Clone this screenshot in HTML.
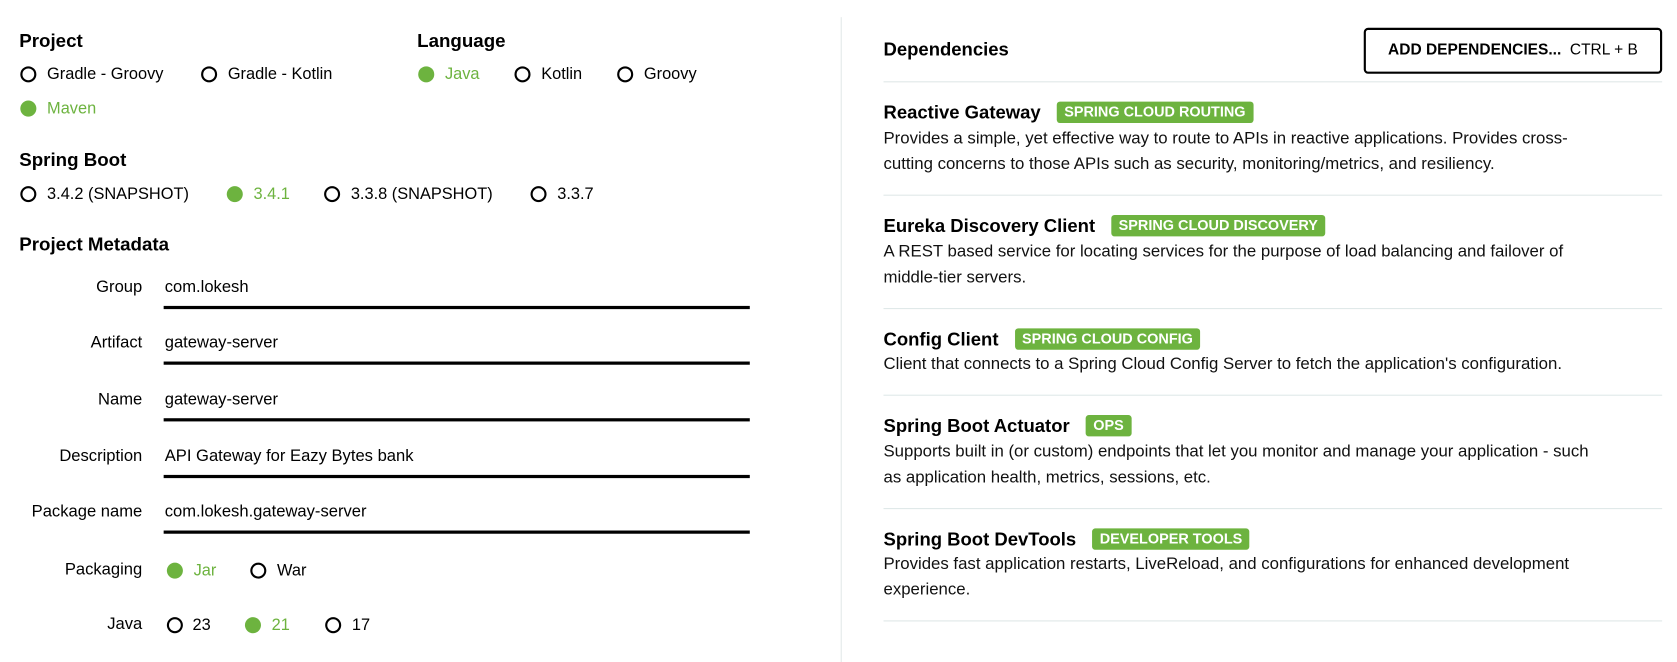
<!DOCTYPE html>
<html><head><meta charset="utf-8"><style>
html,body{margin:0;padding:0;background:#fff;width:1677px;height:662px;overflow:hidden}
#w{position:absolute;left:0;top:0;width:1568px;height:619px;transform:scale(1.0696);transform-origin:0 0;font-family:"Liberation Sans",Arial,sans-serif;color:#000}
.a{position:absolute;white-space:nowrap;line-height:1}
.h{font-weight:bold;font-size:17.5px}
.t{font-size:15.3px}
.r{position:absolute;width:11px;height:11px;border:2px solid #000;border-radius:50%}
.g{position:absolute;width:15px;height:15px;background:#6db33f;border-radius:50%}
.gt{color:#6db33f}
.lbl{position:absolute;right:1435px;font-size:15.5px;line-height:1;text-align:right}
.val{position:absolute;left:154px;font-size:15.5px;line-height:1}
.ul{position:absolute;left:153px;width:548px;height:3px;background:#000}
.dv{position:absolute;left:826px;width:728px;height:1px;background:#dfe8e8}
.dt{font-weight:bold;font-size:17.3px}
.tag{display:inline-block;background:#6db33f;color:#fff;font-size:13.5px;font-weight:bold;padding:3px 7px;border-radius:3px;margin-left:15px;vertical-align:2px}
.ds{font-size:15.7px;line-height:24px;color:#111}
</style></head><body><div id="w">
<div class="a h" style="left:18px;top:30px">Project</div>
<div class="r" style="left:19px;top:62px"></div><div class="a t" style="left:44px;top:62px">Gradle - Groovy</div>
<div class="r" style="left:188px;top:62px"></div><div class="a t" style="left:213px;top:62px">Gradle - Kotlin</div>
<div class="g" style="left:19px;top:94px"></div><div class="a t gt" style="left:44px;top:94px">Maven</div>
<div class="a h" style="left:390px;top:30px">Language</div>
<div class="g" style="left:391px;top:62px"></div><div class="a t gt" style="left:416px;top:62px">Java</div>
<div class="r" style="left:481px;top:62px"></div><div class="a t" style="left:506px;top:62px">Kotlin</div>
<div class="r" style="left:577px;top:62px"></div><div class="a t" style="left:602px;top:62px">Groovy</div>
<div class="a h" style="left:18px;top:141px">Spring Boot</div>
<div class="r" style="left:19px;top:174px"></div><div class="a t" style="left:44px;top:174px">3.4.2 (SNAPSHOT)</div>
<div class="g" style="left:212px;top:174px"></div><div class="a t gt" style="left:237px;top:174px">3.4.1</div>
<div class="r" style="left:303px;top:174px"></div><div class="a t" style="left:328px;top:174px">3.3.8 (SNAPSHOT)</div>
<div class="r" style="left:496px;top:174px"></div><div class="a t" style="left:521px;top:174px">3.3.7</div>
<div class="a h" style="left:18px;top:220px">Project Metadata</div>

<div class="lbl" style="top:261px">Group</div><div class="val" style="top:261px">com.lokesh</div><div class="ul" style="top:286px"></div>
<div class="lbl" style="top:313px">Artifact</div><div class="val" style="top:313px">gateway-server</div><div class="ul" style="top:338px"></div>
<div class="lbl" style="top:366px">Name</div><div class="val" style="top:366px">gateway-server</div><div class="ul" style="top:391px"></div>
<div class="lbl" style="top:419px">Description</div><div class="val" style="top:419px">API Gateway for Eazy Bytes bank</div><div class="ul" style="top:444px"></div>
<div class="lbl" style="top:471px">Package name</div><div class="val" style="top:471px">com.lokesh.gateway-server</div><div class="ul" style="top:496px"></div>
<div class="lbl" style="top:525px">Packaging</div>
<div class="g" style="left:156px;top:526px"></div><div class="a t gt" style="left:181px;top:526px">Jar</div>
<div class="r" style="left:234px;top:526px"></div><div class="a t" style="left:259px;top:526px">War</div>
<div class="lbl" style="top:576px">Java</div>
<div class="r" style="left:156px;top:577px"></div><div class="a t" style="left:180px;top:577px">23</div>
<div class="g" style="left:229px;top:577px"></div><div class="a t gt" style="left:254px;top:577px">21</div>
<div class="r" style="left:304px;top:577px"></div><div class="a t" style="left:329px;top:577px">17</div>

<div style="position:absolute;left:786px;top:16px;width:1px;height:603px;background:#e3eaea"></div>

<div class="a dt" style="left:826px;top:38px">Dependencies</div>
<div style="position:absolute;left:1275px;top:26px;width:275px;height:39px;border:2px solid #000;border-radius:4px;box-sizing:content-box;font-size:14.5px;line-height:39px;text-align:center;white-space:nowrap"><b>ADD DEPENDENCIES...</b>&nbsp; CTRL + B</div>
<div class="dv" style="top:76px"></div>

<div class="a" style="left:826px;top:95px"><span class="dt">Reactive Gateway</span><span class="tag">SPRING CLOUD ROUTING</span></div>
<div class="a ds" style="left:826px;top:118px">Provides a simple, yet effective way to route to APIs in reactive applications. Provides cross-<br>cutting concerns to those APIs such as security, monitoring/metrics, and resiliency.</div>
<div class="dv" style="top:182px"></div>

<div class="a" style="left:826px;top:201px"><span class="dt">Eureka Discovery Client</span><span class="tag">SPRING CLOUD DISCOVERY</span></div>
<div class="a ds" style="left:826px;top:224px">A REST based service for locating services for the purpose of load balancing and failover of<br>middle-tier servers.</div>
<div class="dv" style="top:288px"></div>

<div class="a" style="left:826px;top:307px"><span class="dt">Config Client</span><span class="tag">SPRING CLOUD CONFIG</span></div>
<div class="a ds" style="left:826px;top:329px">Client that connects to a Spring Cloud Config Server to fetch the application's configuration.</div>
<div class="dv" style="top:369px"></div>

<div class="a" style="left:826px;top:388px"><span class="dt">Spring Boot Actuator</span><span class="tag">OPS</span></div>
<div class="a ds" style="left:826px;top:411px">Supports built in (or custom) endpoints that let you monitor and manage your application - such<br>as application health, metrics, sessions, etc.</div>
<div class="dv" style="top:475px"></div>

<div class="a" style="left:826px;top:494px"><span class="dt">Spring Boot DevTools</span><span class="tag">DEVELOPER TOOLS</span></div>
<div class="a ds" style="left:826px;top:516px">Provides fast application restarts, LiveReload, and configurations for enhanced development<br>experience.</div>
<div class="dv" style="top:580px"></div>
</div></body></html>
